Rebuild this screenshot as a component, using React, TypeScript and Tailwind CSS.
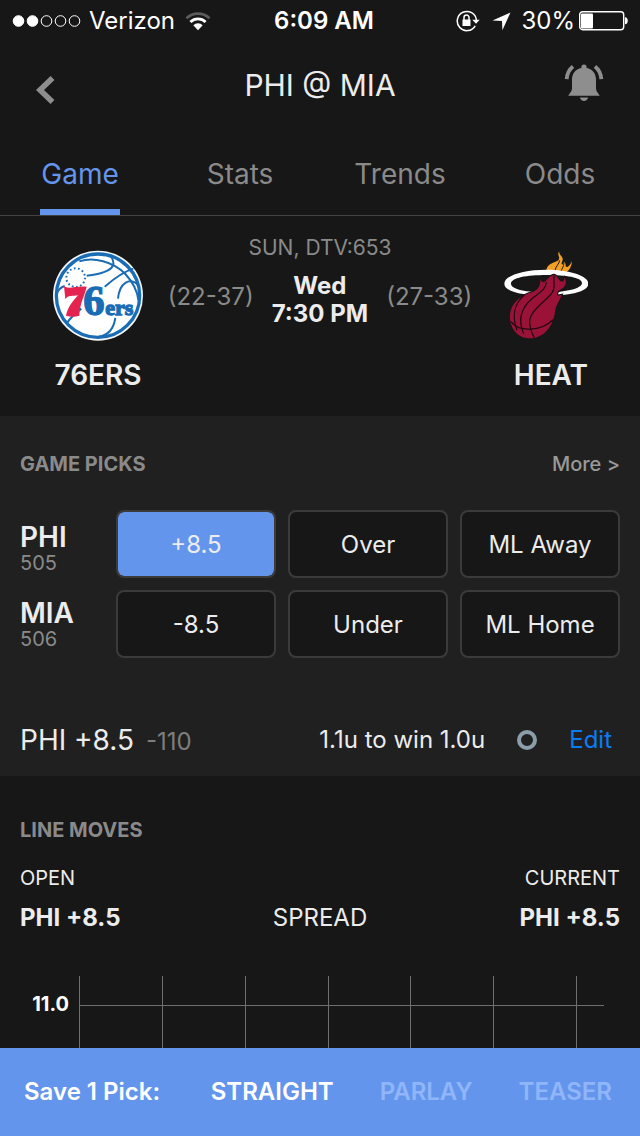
import { useState } from "react";
import clsx from "clsx";

const tabs = ["Game", "Stats", "Trends", "Odds"];

const pickRows = [
  ["+8.5", "Over", "ML Away"],
  ["-8.5", "Under", "ML Home"],
];

const teams = [
  { code: "PHI", rotation: "505" },
  { code: "MIA", rotation: "506" },
];

const betTypes = ["STRAIGHT", "PARLAY", "TEASER"];

// vertical grid lines of the line-move chart
const gridLines = [0.5, 83.5, 166.5, 249.5, 331.5, 414.5, 497.5];

function StatusBar() {
  return (
    <div className="grid h-10 grid-cols-[1fr_auto_1fr] items-center pt-0.5 pr-3 pl-3 text-2xl text-white">
      <div className="flex items-center gap-2">
        <svg width="69" height="14" viewBox="0 0 69 14" fill="none" stroke="#fff" aria-hidden="true">
          <circle cx="6.5" cy="7" r="5.3" fill="#fff" />
          <circle cx="20.5" cy="7" r="5.3" fill="#fff" />
          <circle cx="34.5" cy="7" r="5.3" />
          <circle cx="48.5" cy="7" r="5.3" />
          <circle cx="62.5" cy="7" r="5.3" />
        </svg>
        <span>Verizon</span>
        <svg className="ml-0.5" width="26" height="19" viewBox="0 0 26 19" fill="none" aria-hidden="true">
          <path d="M1.5 6.2a16.5 16.5 0 0 1 23 0" stroke="#5c5c5c" strokeWidth="2.8" />
          <path d="M5.4 10a11 11 0 0 1 15.2 0" stroke="#fff" strokeWidth="2.8" />
          <path d="M8.3 13.2a6.8 6.8 0 0 1 9.4 0L13 18.3z" fill="#fff" />
        </svg>
      </div>
      <span className="pl-2 font-semibold">6:09 AM</span>
      <div className="flex items-center justify-end">
        <svg className="mr-3" width="24" height="22" viewBox="0 0 24 22" fill="none" aria-hidden="true">
          <path d="M19.2 15.8A9.6 9.6 0 1 1 20.4 10" stroke="#fff" strokeWidth="1.5" />
          <path d="M16.3 9.8h7.4L20 13.8z" fill="#fff" />
          <path d="M6.5 9.5h8V16h-8z" fill="#fff" />
          <path d="M8 10V7.6a2.5 2.5 0 0 1 5 0V10" stroke="#fff" strokeWidth="1.5" />
        </svg>
        <svg className="mr-2.5" width="19" height="19" viewBox="0 0 19 19" fill="#fff" aria-hidden="true">
          <path d="M18.5.5 10.4 18.2 10 9 .5 8.6z" />
        </svg>
        <span>30%</span>
        <svg className="ml-1" width="49" height="20" viewBox="0 0 49 20" fill="none" aria-hidden="true">
          <rect x="0.7" y="0.7" width="44" height="18" rx="3" stroke="#fff" strokeWidth="1.4" />
          <rect x="2" y="2.5" width="12" height="15" rx="1" fill="#fff" />
          <path d="M46 6.2c3.7 0 3.7 7 0 7z" fill="#fff" />
        </svg>
      </div>
    </div>
  );
}

function SixersLogo() {
  return (
    <svg width="92" height="92" viewBox="36 28 276 276" role="img" aria-label="76ers logo">
      <circle cx="174" cy="165" r="135" fill="#f4f8fb" />
      <circle cx="174" cy="165" r="125" fill="#fff" stroke="#1a6db4" strokeWidth="10" />
      <g fill="none" stroke="#1a6db4" strokeWidth="6">
        <path d="M118 62C160 48 220 62 256 100C280 126 292 150 295 178" />
        <path d="M140 105C190 100 240 86 212 46" />
        <path d="M194 138C222 114 248 94 280 84" />
        <path d="M234 174C238 128 268 106 298 136" />
        <path d="M50 160C54 148 62 140 74 136" />
        <path d="M80 248C94 228 108 216 124 204" />
        <path d="M176 288C208 284 222 258 226 232" />
      </g>
      <circle cx="107" cy="111" r="28" fill="none" stroke="#1a6db4" strokeWidth="6" strokeDasharray="5 7.57" />
      <path
        d="M72 136C84 148 112 134 140 138C134 166 120 184 118 225C104 229 92 229 78 225C84 198 98 182 114 164C98 168 84 162 76 176Z"
        fill="#e4234f"
      />
      <g
        fill="#1a6db4"
        stroke="#1a6db4"
        strokeWidth="4"
        fontWeight="700"
        className="font-['Liberation_Serif',serif]"
      >
        <text x="130" y="224" fontSize="128">6</text>
        <text x="196" y="222" fontSize="66">ers</text>
      </g>
    </svg>
  );
}

function HeatLogo() {
  return (
    <svg width="84" height="90" viewBox="39 31 252 270" role="img" aria-label="Heat logo">
      <path
        d="M166 92C168 72 190 70 202 62C210 52 196 46 205 35C202 47 220 50 214 64C208 76 216 78 219 67C228 72 220 82 228 82C236 80 240 70 243 64C242 80 236 90 226 98L190 100Z"
        fill="#f3a026"
      />
      <path
        d="M206 62C204 74 194 80 192 92M219 70C218 82 212 88 210 94"
        fill="none"
        stroke="#171717"
        strokeWidth="3"
      />
      <path
        fillRule="evenodd"
        d="M40 132C40 108 96 90 166 90S292 108 292 132S236 168 166 168S40 156 40 132ZM60 132C60 149 108 158 166 158S273 147 273 130S224 106 166 106S60 114 60 132Z"
        fill="#fff"
      />
      <path
        d="M148 112C148 126 154 130 162 126C170 120 176 108 188 106C200 106 202 124 212 126C222 126 222 114 218 110C228 122 226 140 214 146C202 154 194 158 200 168L212 166C206 184 194 196 192 216C186 262 156 298 112 296C78 294 54 264 57 224C60 188 94 166 122 158C142 152 150 138 148 112Z"
        fill="#9b1238"
        stroke="#171717"
        strokeWidth="7"
        paintOrder="stroke"
      />
      <g fill="none" stroke="#250812" strokeWidth="4">
        <path d="M190 108C184 126 198 146 178 166C142 202 114 220 116 250C118 270 124 284 130 294" />
        <path d="M166 128C164 152 142 160 122 178C92 204 80 240 98 282" />
        <path d="M100 166C70 192 62 230 78 272" />
        <path d="M60 246C82 278 150 276 186 240" />
      </g>
    </svg>
  );
}

function LineChart() {
  return (
    <div className="flex min-h-[72px] flex-1 pr-9">
      <span className="w-[79px] shrink-0 pt-4 pr-2.5 text-right text-xl leading-6 font-bold text-white">11.0</span>
      <svg className="h-[72px] flex-1" viewBox="0 0 525 72" preserveAspectRatio="none" aria-hidden="true">
        <g stroke="#6f6f6f" strokeWidth="1">
          {gridLines.map((x) => (
            <line key={x} x1={x} x2={x} y1="0" y2="72" />
          ))}
          <line x1="0" x2="525" y1="29.5" y2="29.5" />
        </g>
      </svg>
    </div>
  );
}

export default function App() {
  const [tab, setTab] = useState("Game");
  const [pick, setPick] = useState("+8.5");
  const [betType, setBetType] = useState("STRAIGHT");

  return (
    <div className="flex min-h-screen flex-col bg-[#171717] font-[Inter,'Liberation_Sans',sans-serif] text-[#ececec]">
      <StatusBar />

      <header className="flex h-[90px] items-center justify-between px-9">
        <button aria-label="Back" className="w-10 pt-2.5">
          <svg width="20" height="30" viewBox="0 0 20 30" fill="none">
            <path d="M16.5 3 4 15 16.5 27" stroke="#8e8e8e" strokeWidth="5.6" />
          </svg>
        </button>
        <h1 className="text-[30px] leading-9">PHI @ MIA</h1>
        <button aria-label="Alerts" className="pb-1">
          <svg width="40" height="38" viewBox="0 0 40 38" fill="#8e8e8e">
            <path d="M20 .5c1.8 0 2.7 1.2 2.7 3.4C28.5 5 32 9.5 32 15.5V24c0 3.5 2 4.5 3.8 7.8H4.2C6 28.5 8 27.5 8 24v-8.5C8 9.5 11.5 5 17.3 3.9 17.3 1.7 18.2.5 20 .5z" />
            <path d="M16 33.5h8c-.5 4.6-7.5 4.6-8 0z" />
            <path d="M9 2.5C5.2 5.5 3 10 2.7 15.2M31 2.5c3.8 3 6 7.5 6.3 12.7" fill="none" stroke="#8e8e8e" strokeWidth="3.8" />
          </svg>
        </button>
      </header>

      <nav className="grid h-[86px] grid-cols-4 border-b border-[#434343]">
        {tabs.map((name) => (
          <button key={name} onClick={() => setTab(name)} className="flex justify-center text-[28px] leading-8">
            <span
              className={clsx(
                "flex h-full min-w-20 items-center justify-center border-b-6 pt-2",
                tab === name ? "border-[#6495ed] text-[#6495ed]" : "border-transparent text-[#8a8a8a]"
              )}
            >
              {name}
            </span>
          </button>
        ))}
      </nav>

      <section className="flex h-[200px] justify-between px-[52px] pt-5">
        <div className="flex w-[92px] flex-col items-center pt-3.5">
          <SixersLogo />
          <h2 className="pt-[15px] text-[28px] leading-9 font-semibold">76ERS</h2>
        </div>
        <div className="flex flex-col items-center text-2xl leading-7">
          <p className="text-[21px] leading-6 text-[#8a8a8a]">SUN, DTV:653</p>
          <div className="flex items-center gap-[18px] pt-3">
            <span className="pb-1.5 text-[#8a8a8a]">(22-37)</span>
            <p className="text-center font-bold">
              Wed
              <br />
              7:30 PM
            </p>
            <span className="pb-1.5 text-[#8a8a8a]">(27-33)</span>
          </div>
        </div>
        <div className="flex w-[92px] flex-col items-end pt-3.5">
          <HeatLogo />
          <h2 className="pt-[17px] text-[28px] leading-9 font-semibold">HEAT</h2>
        </div>
      </section>

      <section className="bg-[#202020] px-5 pt-9">
        <div className="flex items-center justify-between text-xl leading-6 text-[#8a8a8a]">
          <h3 className="font-bold">GAME PICKS</h3>
          <a href="#picks" className="font-medium text-[#999999]">More &gt;</a>
        </div>

        <div className="flex items-center pt-[34px]">
          <div className="flex w-24 shrink-0 flex-col gap-6 pt-1.5">
            {teams.map((team) => (
              <div key={team.code}>
                <p className="text-[28px] leading-7 font-semibold">{team.code}</p>
                <p className="text-xl leading-6 text-[#8a8a8a]">{team.rotation}</p>
              </div>
            ))}
          </div>
          <div className="grid flex-1 grid-cols-3 gap-3">
            {pickRows.flat().map((label) => (
              <button
                key={label}
                onClick={() => setPick(label)}
                className={clsx(
                  "h-[68px] rounded-lg border-2 border-[#3b3b3b] bg-clip-padding pt-0.5 text-2xl",
                  pick === label ? "bg-[#6495ed]" : "bg-[#171717]"
                )}
              >
                {label}
              </button>
            ))}
          </div>
        </div>

        <div className="mt-[46px] flex h-[72px] items-center justify-between pr-2">
          <p className="text-[28px]">
            PHI +8.5 <span className="ml-1 text-2xl text-[#7d7d7d]">-110</span>
          </p>
          <div className="flex items-center gap-8 text-2xl">
            <span>1.1u to win 1.0u</span>
            <span className="size-5 rounded-full border-4 border-[#8a9da8]" />
            <button className="text-[#0a7cf5]">Edit</button>
          </div>
        </div>
      </section>

      <section className="flex flex-1 flex-col pt-[42px]">
        <div className="px-5">
          <h3 className="text-xl leading-6 font-bold text-[#8a8a8a]">LINE MOVES</h3>
          <div className="flex justify-between pt-6 text-xl leading-6">
            <span>OPEN</span>
            <span>CURRENT</span>
          </div>
          <div className="grid grid-cols-3 pt-3.5 pb-11 text-2xl leading-7">
            <span className="font-bold">PHI +8.5</span>
            <span className="text-center">SPREAD</span>
            <span className="text-right font-bold">PHI +8.5</span>
          </div>
        </div>
        <LineChart />
      </section>

      <footer className="sticky bottom-0 flex h-22 items-center justify-between bg-[#6495ed] pr-7 pl-6 text-2xl font-semibold text-white">
        <span>Save 1 Pick:</span>
        <div className="flex gap-[46px]">
          {betTypes.map((type) => (
            <button
              key={type}
              onClick={() => setBetType(type)}
              className={clsx(betType === type ? "text-white" : "text-[#90b5f8]")}
            >
              {type}
            </button>
          ))}
        </div>
      </footer>
    </div>
  );
}
